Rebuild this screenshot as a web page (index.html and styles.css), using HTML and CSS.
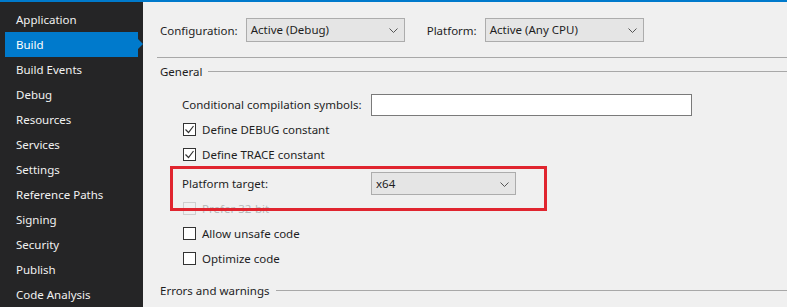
FILE: index.html
```html
<!DOCTYPE html>
<html lang="en">
<head>
    <meta charset="UTF-8">
    <title>Build Properties</title>
    <link rel="stylesheet" href="styles.css">
</head>
<body>
    <div class="topbar"></div>
    <div class="layout">
        <ul class="sidebar">
            <li>Application</li>
            <li class="active">Build</li>
            <li>Build Events</li>
            <li>Debug</li>
            <li>Resources</li>
            <li>Services</li>
            <li>Settings</li>
            <li>Reference Paths</li>
            <li>Signing</li>
            <li>Security</li>
            <li>Publish</li>
            <li>Code Analysis</li>
        </ul>

        <div class="main">
            <div class="toolbar">
                <span class="label config-label">Configuration:</span>
                <div class="select">Active (Debug)<svg class="chev" width="9" height="5" viewBox="0 0 9 5"><polyline points="0.5,0.5 4.5,4.5 8.5,0.5"/></svg></div>
                <span class="label platform-label">Platform:</span>
                <div class="select">Active (Any CPU)<svg class="chev" width="9" height="5" viewBox="0 0 9 5"><polyline points="0.5,0.5 4.5,4.5 8.5,0.5"/></svg></div>
            </div>

            <div class="section-head">General</div>

            <div class="rows">
                <div class="row">
                    <span class="row-label">Conditional compilation symbols:</span>
                    <div class="textbox"></div>
                </div>
                <div class="row">
                    <span class="check checked"><svg width="11" height="11" viewBox="0 0 11 11"><polyline points="1.5,5.5 4.5,8.5 9.5,2"/></svg></span>
                    Define DEBUG constant
                </div>
                <div class="row">
                    <span class="check checked"><svg width="11" height="11" viewBox="0 0 11 11"><polyline points="1.5,5.5 4.5,8.5 9.5,2"/></svg></span>
                    Define TRACE constant
                </div>
                <div class="row target-row">
                    <span class="row-label">Platform target:</span>
                    <div class="select small">x64<svg class="chev" width="9" height="5" viewBox="0 0 9 5"><polyline points="0.5,0.5 4.5,4.5 8.5,0.5"/></svg></div>
                </div>
                <div class="row disabled">
                    <span class="check"></span>
                    Prefer 32-bit
                </div>
                <div class="row">
                    <span class="check"></span>
                    Allow unsafe code
                </div>
                <div class="row">
                    <span class="check"></span>
                    Optimize code
                </div>
            </div>

            <div class="section-head errors">Errors and warnings</div>

            <div class="highlight-box"></div>
        </div>
    </div>
</body>
</html>
```

FILE: styles.css
```css
:root {
    --accent: #007acc;
    --sidebar-bg: #252526;
    --page-bg: #f0f0f0;
    --text: #1e1e1e;
    --line: #a8a8a8;
}

* {
    margin: 0;
    padding: 0;
    box-sizing: border-box;
}

body {
    background: var(--page-bg);
    color: var(--text);
    font-family: 'Noto Sans', 'Open Sans', sans-serif;
    font-size: 11.5px;
    height: 307px;
    overflow: hidden;
}

.topbar {
    height: 2px;
    background: var(--accent);
}

.layout {
    display: flex;
    height: 305px;
}

/* left navigation */
.sidebar {
    list-style: none;
    width: 143px;
    flex-shrink: 0;
    background: var(--sidebar-bg);
    padding-top: 5px;
}

.sidebar li {
    position: relative;
    height: 25px;
    line-height: 25px;
    margin-left: 5px;
    width: 133px;
    padding-left: 11px;
    color: #f1f1f1;
}

.sidebar li.active {
    background: var(--accent);
    color: #fff;
}

.sidebar li.active::after {
    content: '';
    position: absolute;
    right: -5px;
    top: 7px;
    border-top: 5px solid transparent;
    border-bottom: 5px solid transparent;
    border-left: 5px solid var(--accent);
}

/* property page */
.main {
    position: relative;
    flex: 1;
    padding-left: 14px;
}

.toolbar {
    display: flex;
    align-items: center;
    height: 24px;
    margin-top: 16px;
}

.label {
    margin-left: 3px;
}

.config-label {
    margin-right: 8px;
}

.platform-label {
    margin-left: 22px;
    margin-right: 8px;
}

.select {
    position: relative;
    width: 159px;
    height: 24px;
    line-height: 22px;
    padding-left: 4px;
    background: #e5e5e5;
    border: 1px solid #acacac;
}

.select.small {
    width: 145px;
    height: 23px;
    line-height: 21px;
}

.chev {
    position: absolute;
    right: 6px;
    top: 9px;
}

.chev polyline {
    fill: none;
    stroke: #555;
    stroke-width: 1;
}

.section-head {
    display: flex;
    align-items: center;
    height: 27px;
    margin-top: 15px;
    padding-left: 3px;
    border-top: 1px solid var(--line);
}

.section-head::after {
    content: '';
    flex: 1;
    height: 1px;
    margin-left: 6px;
    background: var(--line);
}

.section-head.errors {
    border-top: none;
    margin-top: 11px;
    height: 16px;
}

.rows {
    padding-left: 25px;
    margin-top: 8px;
}

.row {
    display: flex;
    align-items: center;
    height: 25px;
}

.row-label {
    width: 189px;
}

.textbox {
    width: 321px;
    height: 22px;
    background: #fff;
    border: 1px solid #7a7a7a;
}

.target-row {
    margin-top: 4px;
}

.check {
    width: 13px;
    height: 13px;
    margin-left: 1px;
    margin-right: 6px;
    background: #fff;
    border: 1px solid #333;
    display: flex;
    align-items: center;
    justify-content: center;
}

.check svg polyline {
    fill: none;
    stroke: #333;
    stroke-width: 1.2;
}

.row.disabled {
    color: #b8b8b8;
}

.row.disabled .check {
    border-color: #cfcfcf;
    background: transparent;
}

/* red annotation frame */
.highlight-box {
    position: absolute;
    left: 27px;
    top: 164px;
    width: 377px;
    height: 45px;
    border: 3px solid #e0252f;
}
```
